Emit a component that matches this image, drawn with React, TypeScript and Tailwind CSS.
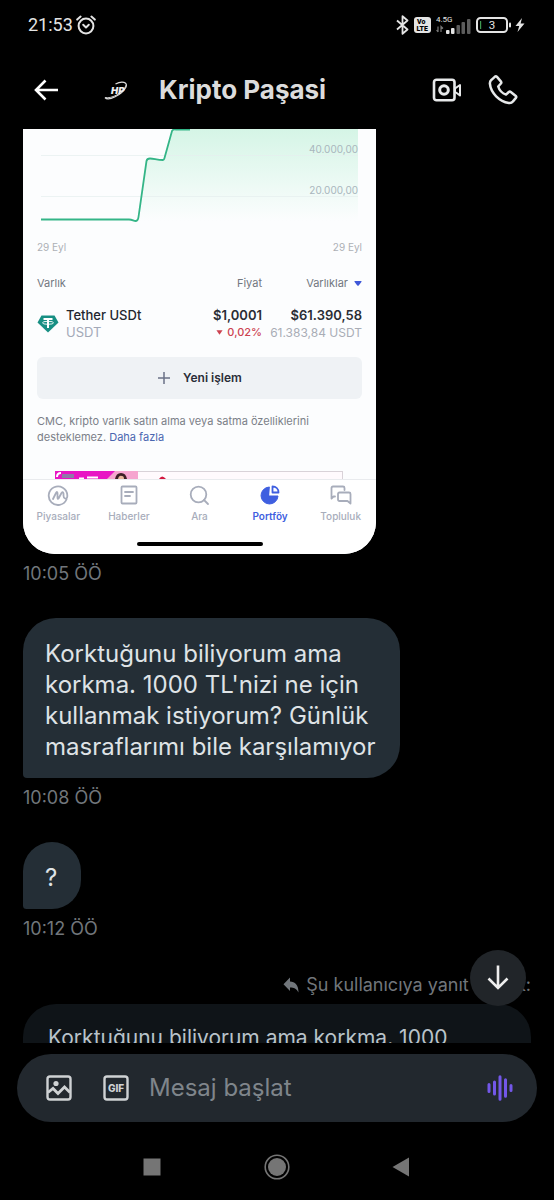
import React, { useState } from 'react';

function AlarmIcon() {
  return (
    <svg viewBox="0 0 20 20" className="w-5 h-5" fill="none" stroke="currentColor" strokeWidth="2" strokeLinecap="round">
      <circle cx="10" cy="11" r="7.4" />
      <path d="M1.2 4.6 L4.6 1.6 M18.8 4.6 L15.4 1.6" />
      <path d="M7.2 9.8 L10 12.4 L12.8 9.8" strokeLinejoin="round" />
    </svg>
  );
}

function StatusBar() {
  return (
    <div className="flex h-[50px] shrink-0 items-center pl-7 pr-7 text-[#e4e4e4]">
      <span className="font-['Roboto'] text-[18px] leading-6">21:53</span>
      <span className="ml-[3px]">
        <AlarmIcon />
      </span>
      <div className="ml-auto flex items-center">
        <svg viewBox="0 0 13 20" className="w-[13px] h-5" fill="none" stroke="currentColor" strokeWidth="1.8" strokeLinejoin="round">
          <path d="M1 5.5 L11.5 14.5 L6.5 18.8 V1.2 L11.5 5.5 L1 14.5" />
        </svg>
        <svg viewBox="0 0 17 16" className="ml-[5px] w-[17px] h-4">
          <rect width="17" height="16" rx="3" fill="#e4e4e4" />
          <text x="3" y="7.4" fontFamily="Roboto" fontSize="7" fontWeight="900" fill="#000">Vo</text>
          <text x="2.4" y="14" fontFamily="Roboto" fontSize="7" fontWeight="900" fill="#000">LTE</text>
        </svg>
        <svg viewBox="0 0 36 20" className="ml-[5px] w-[36px] h-5">
          <text x="0" y="7" fontFamily="Roboto" fontSize="8" fill="#e4e4e4">4.5G</text>
          <path d="M2 17 V11.500 M0.6 15 L2 17 M5 17 V11.500 L7 13.500" stroke="#777" strokeWidth="1.2" fill="none" />
          <rect x="10" y="15" width="3.500" height="4" rx="1" fill="#e4e4e4" />
          <rect x="15" y="13" width="3.500" height="6" rx="1" fill="#e4e4e4" />
          <rect x="20.500" y="10" width="3.500" height="9" rx="1" fill="#5c5c5c" />
          <rect x="25.500" y="7" width="3.500" height="12" rx="1" fill="#5c5c5c" />
          <rect x="31" y="4" width="3.500" height="15" rx="1" fill="#5c5c5c" />
        </svg>
        <svg viewBox="0 0 50 18" className="ml-1 w-[50px] h-[18px]">
          <rect x="1" y="2" width="30" height="14" rx="3.500" fill="none" stroke="#e4e4e4" strokeWidth="2" />
          <rect x="4" y="5" width="1.200" height="8" fill="#3f9a52" />
          <rect x="33" y="6.500" width="2" height="5" rx="1" fill="#e4e4e4" />
          <text x="16" y="13" textAnchor="middle" fontFamily="Roboto" fontSize="11.500" fill="#e4e4e4">3</text>
          <path d="M46 2 L39.500 10 H43.200 L41.500 16 L48.500 7.600 H44.600 Z" fill="#e4e4e4" />
        </svg>
      </div>
    </div>
  );
}

function ChatHeader() {
  return (
    <header className="flex h-[79px] shrink-0 items-center pl-[33px] pr-9 text-[#e7e9ea]">
      <button aria-label="Geri">
        <svg viewBox="0 0 26 24" className="w-[26px] h-6" fill="none" stroke="#fff" strokeWidth="2.600">
          <path d="M25 12 H3 M12.500 2.500 L3 12 L12.500 21.500" />
        </svg>
      </button>
      <svg viewBox="0 0 28 28" className="ml-[44px] w-7 h-7" fill="none">
        <path d="M2 21.500 C5 25.500 19 19 23 11 C25 6 19 4.500 12.500 8" stroke="#ddd" strokeWidth="1.300" />
        <path d="M2 21.500 C9 23 20 17 23.500 8.500" stroke="#ccc" strokeWidth="1" />
        <text x="8" y="18" fontFamily="Inter" fontSize="9.500" fontWeight="900" fontStyle="italic" fill="#eee">HP</text>
      </svg>
      <h1 className="ml-7 text-[26px] leading-8 font-bold text-[#dcdcdc]">Kripto Paşasi</h1>
      <div className="ml-auto flex items-center gap-[26px]">
        <button aria-label="Görüntülü arama">
          <svg viewBox="0 0 30 24" className="w-[30px] h-6" fill="none" stroke="currentColor" strokeWidth="2.600">
            <rect x="2" y="1.800" width="20.500" height="20.400" rx="2.500" />
            <circle cx="12" cy="12" r="4.300" strokeWidth="3" />
            <path d="M23 10.500 L28 7 V17.500 L23 13.800 Z" strokeLinejoin="round" strokeWidth="2" />
          </svg>
        </button>
        <button aria-label="Sesli arama">
          <svg viewBox="0 0 30 30" className="w-[30px] h-[30px]" fill="none" stroke="currentColor" strokeWidth="2.500" strokeLinejoin="round">
            <path d="M3.500 4.800 L7 1.600 Q8 0.900 9 1.900 L13 6.600 Q13.700 7.600 12.900 8.500 L10.200 11.500 C11.300 15 14.500 18.400 18 19.600 L20.800 17 Q21.800 16.200 22.800 17 L27.800 21 Q28.700 21.900 27.900 22.900 L24.800 26.600 Q23.500 28.300 20.800 27.900 C11.500 26.500 2.700 18 1.900 8.700 Q1.700 6.300 3.500 4.800 Z" />
          </svg>
        </button>
      </div>
    </header>
  );
}

function PriceChart() {
  return (
    <div className="relative h-[110px]">
      <svg viewBox="0 0 353 110" preserveAspectRatio="none" className="w-full h-full" fill="none">
        <defs>
          <linearGradient id="area" x1="0" y1="0" x2="0" y2="1">
            <stop offset="0" stopColor="#d5f5e6" />
            <stop offset="1" stopColor="#fcfdfe" />
          </linearGradient>
        </defs>
        <path d="M114 92 L124 30 L141 31 L150 0 H335 V92 Z" fill="url(#area)" />
        <path d="M18 26.500 H335 M18 67.500 H335" stroke="#e6eeee" strokeOpacity="0.7" />
        <path
          d="M18 90.500 H106 C110 90.500 110 92 113 92 Q115 92 115.500 88 L123.500 32 Q124 29.500 127 29.500 C131 29.500 134 31 140 31 Q141 31 141.500 29 L149 2 Q150 0 153 0.500 H167"
          stroke="#34b587"
          strokeWidth="1.800"
        />
      </svg>
      <span className="absolute right-[18px] top-3 text-[10px] leading-4 text-[#a9b6bd]">40.000,00</span>
      <span className="absolute right-[18px] top-[53px] text-[10px] leading-4 text-[#a9b6bd]">20.000,00</span>
    </div>
  );
}

function AssetTable() {
  return (
    <table className="mt-5 w-full text-right">
      <thead>
        <tr className="text-[11px] leading-4 text-[#72777f]">
          <th className="text-left font-normal">Varlık</th>
          <th className="font-normal">Fiyat</th>
          <th className="w-[100px] font-normal">
            Varlıklar
            <svg viewBox="0 0 8 5" className="ml-[6px] mb-px inline w-2 h-[5px]">
              <path d="M1 0 H7 Q8 0 7.400 1 L4.700 4.400 Q4 5 3.300 4.400 L0.600 1 Q0 0 1 0 Z" fill="#3e57d8" />
            </svg>
          </th>
        </tr>
      </thead>
      <tbody>
        <tr className="text-[13px] leading-[17px]">
          <td className="pt-4 text-left">
            <div className="flex items-center gap-[7px]">
              <svg viewBox="0 0 22 18" className="w-[22px] h-[18px]">
                <path d="M4.500 0.500 H17.500 L21.500 7.500 L11 17.500 L0.500 7.500 Z" fill="#178f83" />
                <path d="M6.500 4 H15.500 M11 4 V13" stroke="#fff" strokeWidth="2" />
                <ellipse cx="11" cy="7.800" rx="5.500" ry="1.500" fill="none" stroke="#fff" strokeWidth="0.900" />
              </svg>
              <div>
                <div className="font-medium text-[#23262f]">Tether USDt</div>
                <div className="text-[#a3a9b8]">USDT</div>
              </div>
            </div>
          </td>
          <td className="pt-4">
            <div className="font-semibold text-[#2a2d35]">$1,0001</div>
            <div className="text-[11px] font-medium text-[#cc4250]">
              <svg viewBox="0 0 8 5" className="mr-1 mb-px inline w-[7px] h-[5px]">
                <path d="M0.500 0 H7.500 L4 5 Z" fill="#cc4250" />
              </svg>
              0,02%
            </div>
          </td>
          <td className="pt-4">
            <div className="font-semibold text-[#2a2d35]">$61.390,58</div>
            <div className="text-[12px] text-[#a9adb6]">61.383,84 USDT</div>
          </td>
        </tr>
      </tbody>
    </table>
  );
}

const tabs = [
  {
    label: 'Piyasalar',
    icon: (
      <>
        <path d="M19.500 15.500 A9.300 9.300 0 1 1 20.300 11 V12.500 Q20 15 18 14.500 Q16.500 14 16.500 11.500 V9.500 Q16 7 14.500 9 L11.500 14.500 Q10.600 15.500 10.500 13.500 V9 Q10 6.800 9 9 L6 15" />
      </>
    ),
  },
  {
    label: 'Haberler',
    icon: (
      <>
        <rect x="3.500" y="2.500" width="15" height="17" rx="1" />
        <path d="M7 8 H15 M7 12 H12" />
      </>
    ),
  },
  {
    label: 'Ara',
    icon: (
      <>
        <circle cx="10.500" cy="10.500" r="7.800" />
        <path d="M16 16 L20 20" />
      </>
    ),
  },
  {
    label: 'Portföy',
    active: true,
    icon: (
      <>
        <path d="M10 3 A8.500 8.500 0 1 0 19 12 H10 Z" fill="currentColor" stroke="currentColor" strokeWidth="1" />
        <path d="M13.500 2.500 V8.500 H19.500 C19.500 5 17 2.500 13.500 2.500 Z" />
      </>
    ),
  },
  {
    label: 'Topluluk',
    icon: (
      <>
        <path d="M5 12.500 H3.500 L1.500 14.500 V4 Q1.500 2.500 3 2.500 H13 Q14.500 2.500 14.500 4 V6" />
        <path d="M9.500 8.500 H19 Q20.500 8.500 20.500 10 V19.500 L17.500 17 H9.500 Q8 17 8 15.500 V10 Q8 8.500 9.500 8.500 Z" />
      </>
    ),
  },
];

function PortfolioCard() {
  return (
    <div className="w-[353px] overflow-hidden rounded-b-[32px] bg-[#fcfdfe] font-['Inter']">
      <PriceChart />
      <div className="px-[14px]">
        <div className="flex justify-between text-[10px] leading-4 text-[#adb0b6]">
          <span>29 Eyl</span>
          <span>29 Eyl</span>
        </div>
        <AssetTable />
        <button className="mt-4 flex h-[42px] w-full items-center justify-center gap-3 rounded-md bg-[#eff2f5] text-[12px] font-semibold text-[#2a2d38]">
          <svg viewBox="0 0 14 14" className="w-[14px] h-[14px]" stroke="#6b7287" strokeWidth="1.500">
            <path d="M7 1 V13 M1 7 H13" />
          </svg>
          Yeni işlem
        </button>
        <p className="mt-[14px] text-[11px] leading-4 text-[#7b8088]">
          CMC, kripto varlık satın alma veya satma özelliklerini desteklemez.{' '}
          <a href="#" className="text-[#4a66b0]">Daha fazla</a>
        </p>
      </div>
      <svg viewBox="0 0 288 8" className="ml-8 mt-[26px] w-[288px] h-2">
        <rect x="0.500" y="0.500" width="287" height="12" fill="#fffafd" stroke="#d9d2d8" />
        <rect x="0" y="0" width="83" height="8" fill="#e815c4" />
        <path d="M52 8 L60 0 H83 V8 Z" fill="#f6a5cf" />
        <path d="M2 6 Q2 2 6 2 M24 7.500 H29 M32 6.500 H43" stroke="#fff" strokeWidth="2" fill="none" />
        <rect x="7" y="3" width="12" height="4" fill="#8f7aa8" />
        <path d="M60 8 Q61 2 66 2 Q71 2 72 8 Z" fill="#3b1f26" />
        <path d="M63 8 Q64 4 67 5 Q69 5 69 8 Z" fill="#eab79c" />
        <path d="M104 8 Q107 3 111 8 Z" fill="#d3173f" />
      </svg>
      <nav className="flex border-t border-[#e9ebee] bg-white pt-1">
        {tabs.map((t) => (
          <button
            key={t.label}
            className={`flex flex-1 flex-col items-center text-[10px] leading-[14px] ${t.active ? 'font-semibold text-[#3f5fe0]' : 'font-medium text-[#a8adbb]'}`}
          >
            <svg viewBox="0 0 22 22" className="mb-[3px] w-[22px] h-[22px]" fill="none" stroke="currentColor" strokeWidth="1.800" strokeLinejoin="round" strokeLinecap="round">
              {t.icon}
            </svg>
            {t.label}
          </button>
        ))}
      </nav>
      <div className="flex justify-center bg-white pb-2 pt-[19px]">
        <div className="h-1 w-[126px] rounded-full bg-black" />
      </div>
    </div>
  );
}

function Time({ children }: { children: React.ReactNode }) {
  return <div className="mt-2 text-[18px] leading-6 text-[#71767b]">{children}</div>;
}

function Bubble({ children }: { children: React.ReactNode }) {
  return (
    <div className="w-fit min-w-[58px] max-w-[377px] rounded-[33px] rounded-bl-[4px] bg-[#242e36] pt-5 pb-4 pl-[22px] pr-4 text-[24px] leading-[31px] text-[#dfe3e6]">
      {children}
    </div>
  );
}

function Composer() {
  const [text, setText] = useState('');

  return (
    <form className="mx-[17px] mt-[11px] flex h-[68px] shrink-0 items-center rounded-full bg-[#22282e] pl-[29px] pr-6 text-[#cfd2d4]">
      <button type="button" aria-label="Fotoğraf">
        <svg viewBox="0 0 26 26" className="w-[26px] h-[26px]" fill="none" stroke="currentColor" strokeWidth="2.400">
          <rect x="1.500" y="1.500" width="23" height="23" rx="2.500" />
          <circle cx="10" cy="8.500" r="2.600" fill="currentColor" stroke="none" />
          <path d="M2 17.500 L7 13.500 L12 18.500 L18.500 12 L24 17.500" strokeWidth="2.800" />
        </svg>
      </button>
      <button type="button" aria-label="GIF" className="ml-[31px]">
        <svg viewBox="0 0 26 26" className="w-[26px] h-[26px]" fill="none">
          <rect x="1.500" y="1.500" width="23" height="23" rx="2.500" stroke="currentColor" strokeWidth="2.400" />
          <text x="13" y="16.800" textAnchor="middle" fontFamily="Inter" fontSize="10" fontWeight="800" fill="currentColor">GIF</text>
        </svg>
      </button>
      <input
        type="text"
        aria-label="Mesaj"
        value={text}
        onChange={(e) => setText(e.target.value)}
        placeholder="Mesaj başlat"
        className="ml-5 min-w-0 flex-1 bg-transparent text-[24px] leading-8 placeholder-[#7f858b] focus:outline-none"
      />
      <button type="button" aria-label="Ses kaydı">
        <svg viewBox="0 0 26 26" className="w-[26px] h-[26px]" stroke="#7357e8" strokeWidth="3" strokeLinecap="round">
          <path d="M2 9.500 V16.500 M7.500 7 V19 M13 1.800 V24.200 M18.500 4.800 V21.200 M24 10.500 V15.500" />
        </svg>
      </button>
    </form>
  );
}

export default function App() {
  return (
    <div className="flex h-dvh flex-col overflow-hidden bg-black font-['Inter',sans-serif]">
      <StatusBar />
      <ChatHeader />

      <div className="relative flex min-h-0 flex-1 flex-col">
        <main className="min-h-0 flex-1 overflow-hidden px-[23px]">
          <PortfolioCard />
          <Time>10:05 ÖÖ</Time>

          <div className="mt-8">
            <Bubble>Korktuğunu biliyorum ama korkma. 1000 TL'nizi ne için kullanmak istiyorum? Günlük masraflarımı bile karşılamıyor</Bubble>
            <Time>10:08 ÖÖ</Time>
          </div>

          <div className="mt-8">
            <Bubble>?</Bubble>
            <Time>10:12 ÖÖ</Time>
          </div>

          <div className="mt-8">
            <div className="flex items-center justify-end gap-[7px] text-[18px] leading-6 text-[#71767b]">
              <svg viewBox="0 0 16 16" className="w-4 h-4" fill="#71767b">
                <path d="M7 0.500 V4.500 C12 4.500 15.500 8 15.500 15.500 C13.500 11.500 11 10.500 7 10.500 V14 L0.500 7.300 Z" />
              </svg>
              Şu kullanıcıya yanıt olarak:
            </div>
            <div className="mt-[7px] rounded-t-[33px] bg-[#0f1418] px-[25px] py-[18px] text-[21px] leading-[31px] text-[#b9c3ca]">
              Korktuğunu biliyorum ama korkma. 1000
            </div>
          </div>
        </main>

        {/* jump to latest message */}
        <button aria-label="En alta in" className="absolute bottom-[37px] right-7 flex h-14 w-14 items-center justify-center rounded-full bg-[#212529]">
          <svg viewBox="0 0 22 26" className="w-[22px] h-[26px]" fill="none" stroke="#eee" strokeWidth="2.600">
            <path d="M11 0.500 V23 M1.500 13.500 L11 23 L20.500 13.500" />
          </svg>
        </button>
      </div>

      <Composer />

      <nav className="flex h-[78px] shrink-0 items-center justify-around px-[90px] pt-3">
        <button aria-label="Son uygulamalar">
          <svg viewBox="0 0 26 26" className="w-[26px] h-[26px]">
            <rect x="4.500" y="4.500" width="17" height="17" fill="#757575" />
          </svg>
        </button>
        <button aria-label="Ana ekran">
          <svg viewBox="0 0 26 26" className="w-[26px] h-[26px]">
            <circle cx="13" cy="13" r="11.800" fill="none" stroke="#757575" strokeWidth="1.600" />
            <circle cx="13" cy="13" r="9" fill="#757575" />
          </svg>
        </button>
        <button aria-label="Geri tuşu">
          <svg viewBox="0 0 26 26" className="w-[26px] h-[26px]">
            <path d="M3.500 13 L20 3.500 V22.500 Z" fill="#757575" />
          </svg>
        </button>
      </nav>
    </div>
  );
}
